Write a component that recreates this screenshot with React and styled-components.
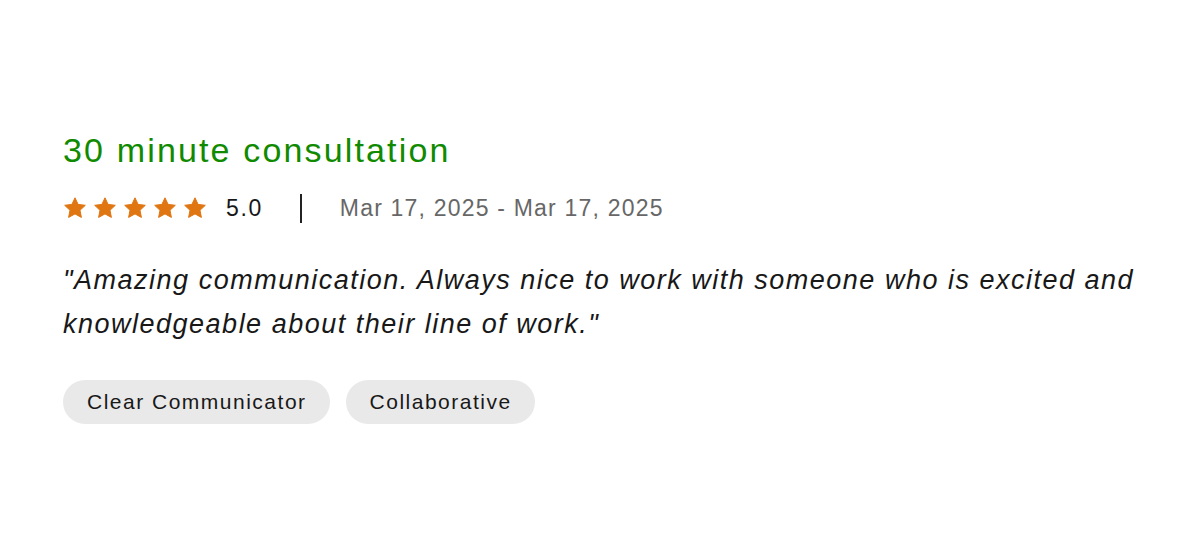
import React from "react";
import styled, { createGlobalStyle } from "styled-components";

const Global = createGlobalStyle`
  html, body { margin: 0; padding: 0; background: #ffffff; }
  body { font-family: "Liberation Sans", Arial, sans-serif; color: #181818; }
`;

const Page = styled.div`
  width: 1200px;
  height: 550px;
  box-sizing: border-box;
  padding: 130px 63px 0;
  display: flex;
  flex-direction: column;
`;

const Title = styled.h2`
  margin: 0;
  font-size: 34px;
  line-height: 40px;
  font-weight: 400;
  letter-spacing: 2.15px;
  color: #108a00;
`;

const MetaRow = styled.div`
  margin-top: 23px;
  height: 30px;
  display: flex;
  align-items: center;
`;

const Stars = styled.div`
  display: flex;
  gap: 6px;
`;

const Rating = styled.span`
  margin-left: 19px;
  font-size: 23px;
  letter-spacing: 1.6px;
  color: #181818;
`;

const Divider = styled.span`
  width: 2px;
  height: 29px;
  background: #222;
  margin: 0 38px 0 37px;
`;

const DateRange = styled.span`
  font-size: 23px;
  letter-spacing: 1.2px;
  color: #676767;
`;

const Quote = styled.p`
  margin: 35px 0 0;
  max-width: 1100px;
  font-size: 27px;
  line-height: 44px;
  font-style: italic;
  letter-spacing: 1.5px;
  color: #181818;
`;

const Chips = styled.div`
  margin-top: 34px;
  display: flex;
  gap: 16px;
`;

const Chip = styled.span`
  height: 44px;
  padding: 0 23px 0 24px;
  display: inline-flex;
  align-items: center;
  border-radius: 22px;
  background: #e9e9e9;
  font-size: 21px;
  letter-spacing: 1.5px;
  color: #181818;
`;

const Star = () => (
  <svg width="24" height="24" viewBox="0 0 24 24">
    <path
      d="M12 1.8l3.1 6.6 7.2.9-5.3 5 1.4 7.1L12 17.9l-6.4 3.5 1.4-7.1-5.3-5 7.2-.9z"
      fill="#df7612"
      stroke="#df7612"
      strokeWidth="1"
      strokeLinejoin="round"
    />
  </svg>
);

export default function App() {
  return (
    <>
      <Global />
      <Page>
        <Title>30 minute consultation</Title>
        <MetaRow>
          <Stars>
            {[0, 1, 2, 3, 4].map((i) => (
              <Star key={i} />
            ))}
          </Stars>
          <Rating>5.0</Rating>
          <Divider />
          <DateRange>Mar 17, 2025 - Mar 17, 2025</DateRange>
        </MetaRow>
        <Quote>
          "Amazing communication. Always nice to work with someone who is excited and
          knowledgeable about their line of work."
        </Quote>
        <Chips>
          <Chip>Clear Communicator</Chip>
          <Chip>Collaborative</Chip>
        </Chips>
      </Page>
    </>
  );
}
